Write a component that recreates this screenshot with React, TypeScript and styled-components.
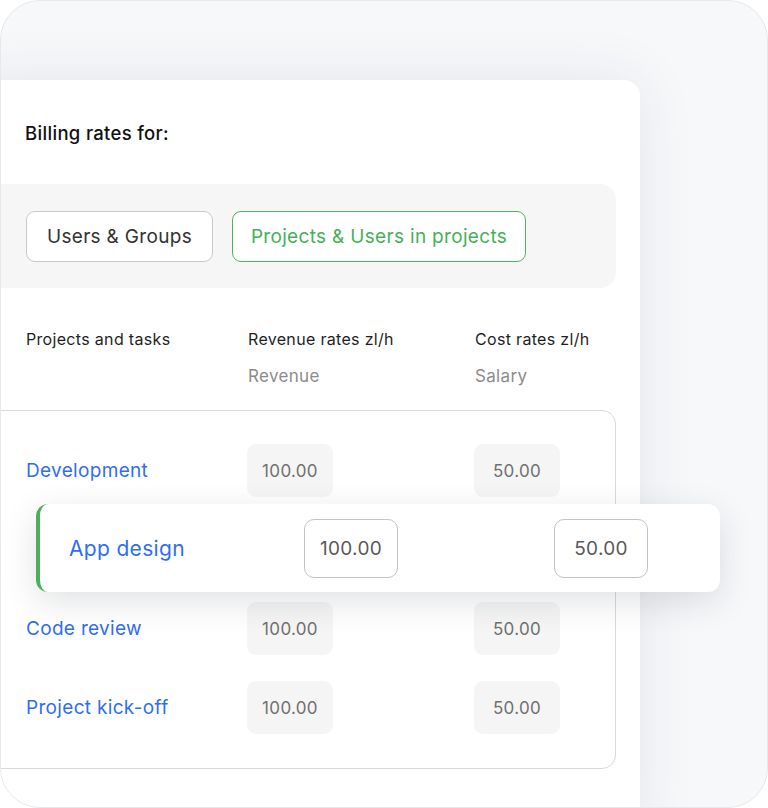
import * as React from "react";
import styled, { createGlobalStyle } from "styled-components";

const GlobalStyle = createGlobalStyle`
    html, body {
        margin: 0;
        padding: 0;
        background: #ffffff;
    }
    * {
        box-sizing: border-box;
    }
`;

const Frame = styled.div`
    width: 768px;
    height: 808px;
    border: 1px solid #e6e8ec;
    border-radius: 40px;
    background: #f7f8fa;
    overflow: hidden;
    padding-top: 79px;
    font-family: Inter, "Open Sans", sans-serif;
    letter-spacing: 0.02em;
`;

const Card = styled.div`
    width: 679px;
    min-height: 760px;
    margin-left: -40px;
    background: #ffffff;
    border-radius: 16px;
    box-shadow: 0 0 60px rgba(30, 40, 70, 0.09);
    padding: 41px 24px 0 64px;
`;

const Title = styled.div`
    font-size: 18.5px;
    line-height: 24px;
    font-weight: 500;
    color: #111111;
`;

const ScopeBox = styled.div`
    margin: 39px 0 0 -40px;
    height: 104px;
    background: #f6f6f6;
    border-radius: 16px;
    display: flex;
    align-items: center;
    gap: 19px;
    padding-left: 41px;
`;

const ScopeButton = styled.button<{ active?: boolean; w: number }>`
    width: ${props => props.w}px;
    height: 51px;
    border-radius: 9px;
    background: #ffffff;
    border: 1.5px solid ${props => props.active ? "#4cb45c" : "#c9c9c9"};
    color: ${props => props.active ? "#46b058" : "#333333"};
    font-family: inherit;
    letter-spacing: inherit;
    font-size: 19px;
    padding: 0;
    cursor: pointer;
`;

const ColumnsGrid = styled.div`
    display: grid;
    grid-template-columns: 222px 227px auto;
    align-items: center;
`;

const HeaderRow = styled(ColumnsGrid)`
    margin-top: 40px;
    padding-left: 1px;
    font-size: 16px;
    line-height: 22px;
    color: #1f1f1f;
`;

const SubRow = styled(ColumnsGrid)`
    margin-top: 15px;
    padding-left: 1px;
    font-size: 17px;
    line-height: 22px;
    color: #8c8c8c;
`;

const TableBox = styled.div`
    margin: 23px 0 0 -40px;
    height: 359px;
    border: 1px solid #d9d9d9;
    border-radius: 14px;
    padding: 33px 0 0 40px;
    display: flex;
    flex-direction: column;
    gap: 26px;
`;

const TaskRow = styled(ColumnsGrid)`
    height: 53px;
`;

const TaskName = styled.span<{ big?: boolean }>`
    color: #2f6ef4;
    font-size: ${props => props.big ? 21 : 19}px;
`;

const RateCell = styled.div`
    width: 86px;
    height: 53px;
    margin-left: -1px;
    border-radius: 9px;
    background: #f5f5f5;
    color: #707070;
    font-size: 17px;
    display: flex;
    align-items: center;
    justify-content: center;
`;

const FloatingRow = styled.div`
    position: relative;
    z-index: 2;
    height: 88px;
    margin: -19px -105px -16px 10px;
    background: #ffffff;
    border-radius: 12px;
    border-left: 4px solid #4caf5c;
    box-shadow: 0 10px 34px rgba(20, 30, 50, 0.13);
    display: grid;
    grid-template-columns: 235px 250px auto;
    align-items: center;
    padding-left: 29px;
`;

const RateInput = styled.div`
    width: 94px;
    height: 59px;
    border: 1.5px solid #c4c4c4;
    border-radius: 10px;
    color: #5a5a5a;
    font-size: 19px;
    display: flex;
    align-items: center;
    justify-content: center;
`;

interface Task {
    name: string;
    revenue: string;
    cost: string;
    editing?: boolean;
}

const tasks: Task[] = [
    {name: "Development", revenue: "100.00", cost: "50.00"},
    {name: "App design", revenue: "100.00", cost: "50.00", editing: true},
    {name: "Code review", revenue: "100.00", cost: "50.00"},
    {name: "Project kick-off", revenue: "100.00", cost: "50.00"},
];

export default function App() {
    return (
        <>
            <GlobalStyle />
            <Frame>
                <Card>
                    <Title>Billing rates for:</Title>

                    <ScopeBox>
                        <ScopeButton w={187}>Users &amp; Groups</ScopeButton>
                        <ScopeButton w={294} active>Projects &amp; Users in projects</ScopeButton>
                    </ScopeBox>

                    <HeaderRow>
                        <span>Projects and tasks</span>
                        <span>Revenue rates zl/h</span>
                        <span>Cost rates zl/h</span>
                    </HeaderRow>
                    <SubRow>
                        <span />
                        <span>Revenue</span>
                        <span>Salary</span>
                    </SubRow>

                    <TableBox>
                        {tasks.map(task => task.editing ? (
                            <FloatingRow key={task.name}>
                                <TaskName big>{task.name}</TaskName>
                                <RateInput>{task.revenue}</RateInput>
                                <RateInput>{task.cost}</RateInput>
                            </FloatingRow>
                        ) : (
                            <TaskRow key={task.name}>
                                <TaskName>{task.name}</TaskName>
                                <RateCell>{task.revenue}</RateCell>
                                <RateCell>{task.cost}</RateCell>
                            </TaskRow>
                        ))}
                    </TableBox>
                </Card>
            </Frame>
        </>
    );
}
